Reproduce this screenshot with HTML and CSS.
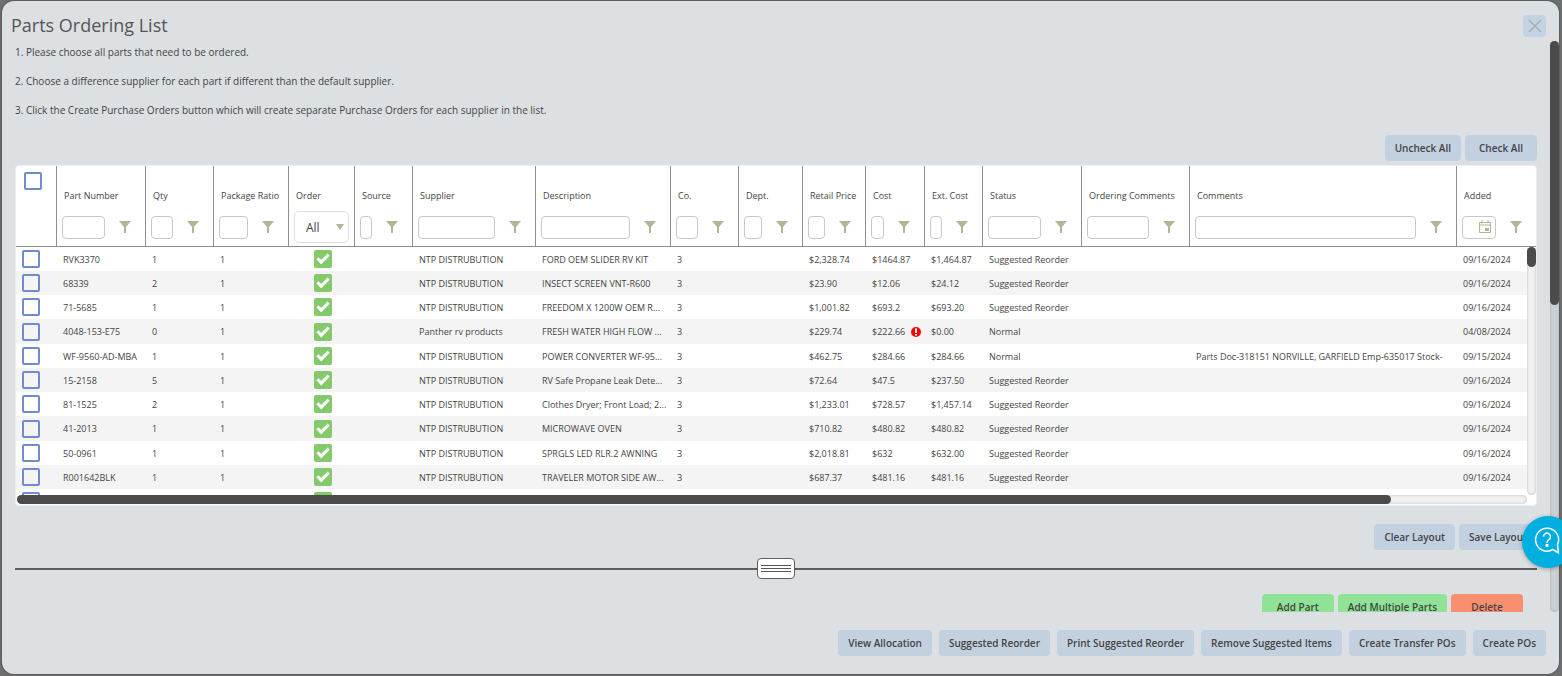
FILE: index.html
```html
<!DOCTYPE html>
<html lang="en">
<head>
    <meta charset="utf-8">
    <title>Parts Ordering List</title>
    <link rel="stylesheet" href="styles.css">
</head>
<body>

    <svg class="sprite" aria-hidden="true">
        <symbol id="funnel" viewBox="0 0 12 12"><path d="M0 0h12L7 6v6H5V6z" fill="currentColor"/></symbol>
        <symbol id="calendar" viewBox="0 0 14 14">
            <path d="M1.5 2.5h11v10h-11zM1.5 5h11M4 0v3.500M10 0v3.500" fill="none" stroke="currentColor"/>
            <path d="M7 8h4v3H7z" fill="currentColor"/>
        </symbol>
        <symbol id="alert" viewBox="0 0 10 10">
            <circle cx="5" cy="5" r="5" fill="#f00"/>
            <path d="M4 1.500h2v4.500H4zM4 7h2v1.500H4z" fill="#fff"/>
        </symbol>
    </svg>

    <div class="modal" role="dialog" aria-labelledby="title">
        <header class="modal-header">
            <h1 id="title">Parts Ordering List</h1>
            <button type="button" class="close" aria-label="Close">
                <svg width="14" height="14" viewBox="0 0 14 14"><path d="M1 1l12 12M13 1L1 13" stroke="#a9adb3" stroke-width="1.500"/></svg>
            </button>
        </header>

        <div class="modal-body">
            <div class="content">
                <div class="steps">
                    <p>1. Please choose all parts that need to be ordered.</p>
                    <p>2. Choose a difference supplier for each part if different than the default supplier.</p>
                    <p>3. Click the Create Purchase Orders button which will create separate Purchase Orders for each supplier in the list.</p>
                </div>

                <div class="toolbar">
                    <button type="button" class="btn">Uncheck All</button>
                    <button type="button" class="btn">Check All</button>
                </div>

                <div class="grid">
                    <div class="grid-view">
                        <table>
                            <colgroup id="cols"></colgroup>
                            <thead><tr id="head"></tr></thead>
                            <tbody id="rows"></tbody>
                        </table>
                        <div class="vscroll"><div class="thumb"></div></div>
                    </div>
                    <div class="hscroll"><div class="thumb"></div></div>
                </div>

                <div class="toolbar layout-bar">
                    <button type="button" class="btn">Clear Layout</button>
                    <button type="button" class="btn">Save Layout</button>
                </div>

                <div class="splitter">
                    <button type="button" class="handle" aria-label="Resize"><span></span><span></span><span></span></button>
                </div>

                <div class="toolbar part-bar">
                    <button type="button" class="btn green">Add Part</button>
                    <button type="button" class="btn green">Add Multiple Parts</button>
                    <button type="button" class="btn red">Delete</button>
                </div>
            </div>
            <div class="page-scroll"><div class="thumb"></div></div>
        </div>

        <footer class="modal-footer">
            <button type="button" class="btn">View Allocation</button>
            <button type="button" class="btn">Suggested Reorder</button>
            <button type="button" class="btn">Print Suggested Reorder</button>
            <button type="button" class="btn">Remove Suggested Items</button>
            <button type="button" class="btn">Create Transfer POs</button>
            <button type="button" class="btn">Create POs</button>
        </footer>
    </div>

    <button type="button" class="help" aria-label="Help">
        <svg width="28" height="30" viewBox="0 0 28 30" fill="none" stroke="#fff" stroke-width="1.500">
            <path d="M19 23.500A11.500 11.500 0 1 1 23.500 18.500L24.500 27z" stroke-linejoin="round"/>
            <path d="M9.500 10.500a3.500 3.500 0 1 1 5.500 3c-1.500 1-2 1.500-2 3.500"/>
            <circle cx="13" cy="19.500" r="1"/>
        </svg>
    </button>

    <script src="script.js"></script>
</body>
</html>
```
FILE: styles.css
```css
* {
    box-sizing: border-box;
}

body {
    margin: 0;
    height: 100vh;
    padding: 1px 3px 2px 2px;
    background-color: #6f6e6f;
    font-family: "Open Sans", sans-serif;
    font-size: 9px;
    color: #444;
    overflow: hidden;
}

button,
input,
select {
    font-family: inherit;
    color: inherit;
}

.sprite {
    display: none;
}

.modal {
    display: flex;
    flex-direction: column;
    height: 100%;
    background-color: #dce0e3;
    border-radius: 12px;
    box-shadow: 0 0 2px #333;
    overflow: hidden;
}

.modal-header {
    display: flex;
    justify-content: space-between;
    align-items: center;
    height: 40px;
    padding: 9px 13px 0 9px;
}

h1 {
    margin: 0;
    font-size: 18px;
    line-height: 26px;
    padding-bottom: 2px;
    font-weight: 400;
    color: #555;
}

.close {
    display: flex;
    align-items: center;
    justify-content: center;
    width: 23px;
    height: 22px;
    padding: 0;
    border: none;
    border-radius: 4px;
    background-color: #c3d3e4;
}

.modal-body {
    display: flex;
    flex: 1;
    min-height: 0;
    overflow: hidden;
}

.content {
    flex: 1;
    min-width: 0;
    padding: 0 13px;
}

.steps {
    display: flex;
    flex-direction: column;
    gap: 7px;
    font-size: 10px;
}

.steps p {
    margin: 0;
    line-height: 22px;
}

.toolbar {
    display: flex;
    justify-content: flex-end;
    gap: 4px;
    padding: 14px 0 4px;
}

.btn {
    min-width: 72px;
    height: 26px;
    padding: 0 10px;
    border: none;
    border-radius: 4px;
    background-color: #c3d0e0;
    font-size: 10px;
    font-weight: 600;
    color: #444;
    white-space: nowrap;
}

.green {
    background-color: #8fe296;
}

.red {
    background-color: #f98f70;
}

/* parts grid */
.grid {
    background-color: #fff;
    border: 1px solid #eceeef;
    border-radius: 4px;
    overflow: hidden;
}

.grid-view {
    position: relative;
    height: 329px;
    overflow: hidden;
}

table {
    width: 100%;
    table-layout: fixed;
    border-collapse: separate;
    border-spacing: 0;
}

th {
    height: 81px;
    padding: 0;
    border-left: 1px solid #8f8f8f;
    border-bottom: 1px solid #8f8f8f;
    font-weight: 400;
    text-align: left;
    vertical-align: top;
}

th:first-child {
    border-left: none;
    padding: 6px 8px;
}

.name {
    padding: 22px 0 0 7px;
    line-height: 16px;
    white-space: nowrap;
}

.filter {
    display: flex;
    align-items: center;
    gap: 14px;
    height: 32px;
    margin-top: 7px;
    padding: 0 14px 0 5px;
    color: #b1b696;
}

.filter input {
    width: 100%;
    height: 23px;
    padding: 0 3px;
    border: 1px solid #c8c8c8;
    border-radius: 4px;
}

.filter svg {
    flex: none;
}

.date {
    display: flex;
    position: relative;
    flex: 1;
}

.date svg {
    position: absolute;
    right: 4px;
    top: 4px;
}

.choice {
    position: relative;
    margin: 7px 5px 0;
    color: #b1b696;
}

.choice select {
    width: 100%;
    height: 32px;
    padding: 0 11px;
    border: 1px solid #e0e0e6;
    border-radius: 5px;
    background-color: #fff;
    appearance: none;
    font-size: 12px;
    color: #444;
}

.choice svg {
    position: absolute;
    right: 5px;
    top: 13px;
}

td {
    height: 24px;
    padding: 0 0 0 7px;
    overflow: hidden;
    white-space: nowrap;
}

tr:nth-child(4n) td {
    height: 25px;
}

tbody tr:nth-child(even) {
    background-color: #f4f4f4;
}

td:first-child {
    padding-left: 6px;
}

td:nth-child(5) {
    padding-left: 26px;
}

td svg {
    margin-left: 3px;
    vertical-align: -2px;
}

input[type="checkbox"] {
    display: block;
    width: 18px;
    height: 18px;
    margin: 0;
    border: 2px solid #6f8ccf;
    border-radius: 2px;
    background-color: transparent;
    appearance: none;
}

input.order {
    overflow: hidden;
    border: none;
    background-color: #84c96b;
}

input.order::after {
    content: "";
    display: block;
    box-sizing: border-box;
    width: 12px;
    height: 7px;
    margin: 4px 0 0 3px;
    border-left: 3px solid #fff;
    border-bottom: 3px solid #fff;
    transform: rotate(-45deg);
}

/* scrollbars */
.thumb {
    background-color: #4b4b4b;
    border-radius: 5px;
}

.vscroll {
    position: absolute;
    top: 81px;
    right: 0;
    bottom: 0;
    width: 9px;
    background-color: #f1f1f1;
    border-radius: 5px;
    box-shadow: inset 0 0 3px #bbb;
}

.vscroll .thumb {
    height: 20px;
}

.hscroll {
    height: 9px;
    margin: 0 9px 1px 1px;
    background-color: #f1f1f1;
    border-radius: 5px;
    box-shadow: inset 0 0 3px #bbb;
}

.hscroll .thumb {
    width: 91%;
    height: 9px;
}

.page-scroll {
    width: 9px;
    border-radius: 5px;
    background-color: #cdd1d4;
    box-shadow: inset 0 0 3px #aaa;
}

.page-scroll .thumb {
    height: 264px;
}

.layout-bar {
    padding-top: 18px;
}

.splitter {
    display: flex;
    align-items: center;
    margin-top: 4px;
}

.splitter::before,
.splitter::after {
    content: "";
    flex: 1;
    height: 2px;
    background-color: #5f5d5e;
}

.handle {
    display: flex;
    flex-direction: column;
    justify-content: center;
    gap: 2px;
    width: 38px;
    height: 21px;
    padding: 0 3px;
    border: 1px solid #5f5d5e;
    border-radius: 4px;
    background-color: #fff;
}

.handle span {
    height: 1px;
    background-color: #555;
}

.part-bar {
    padding: 15px 14px 0 0;
}

.modal-footer {
    display: flex;
    justify-content: flex-end;
    gap: 7px;
    padding: 18px 13px;
}

.help {
    position: fixed;
    right: -12px;
    bottom: 108px;
    width: 52px;
    height: 52px;
    padding: 2px 0 0 12px;
    border: none;
    border-radius: 50%;
    background-color: #00aee0;
    box-shadow: 0 1px 4px rgba(0, 0, 0, 0.3);
    text-align: left;
}
```
FILE: script.js
```js
// [title, width], the column without a width takes what is left
const columns = [
    ["", 40], ["Part Number", 89], ["Qty", 68], ["Package Ratio", 75], ["Order", 66], ["Source", 58],
    ["Supplier", 123], ["Description", 135], ["Co.", 68], ["Dept.", 64], ["Retail Price", 63],
    ["Cost", 59], ["Ext. Cost", 58], ["Status", 99], ["Ordering Comments", 108], ["Comments", 0], ["Added", 80]
];

const NTP = "NTP DISTRUBUTION";
const SR = "Suggested Reorder";
const parts = [
    ["RVK3370", 1, NTP, "FORD OEM SLIDER RV KIT", "$2,328.74", "$1464.87", "$1,464.87", SR, "", "09/16/2024"],
    ["68339", 2, NTP, "INSECT SCREEN VNT-R600", "$23.90", "$12.06", "$24.12", SR, "", "09/16/2024"],
    ["71-5685", 1, NTP, "FREEDOM X 1200W OEM R...", "$1,001.82", "$693.2", "$693.20", SR, "", "09/16/2024"],
    ["4048-153-E75", 0, "Panther rv products", "FRESH WATER HIGH FLOW ...", "$229.74", "$222.66", "$0.00", "Normal", "", "04/08/2024"],
    ["WF-9560-AD-MBA", 1, NTP, "POWER CONVERTER WF-95...", "$462.75", "$284.66", "$284.66", "Normal", "Parts Doc-318151 NORVILLE, GARFIELD Emp-635017 Stock-", "09/15/2024"],
    ["15-2158", 5, NTP, "RV Safe Propane Leak Dete...", "$72.64", "$47.5", "$237.50", SR, "", "09/16/2024"],
    ["81-1525", 2, NTP, "Clothes Dryer; Front Load; 2...", "$1,233.01", "$728.57", "$1,457.14", SR, "", "09/16/2024"],
    ["41-2013", 1, NTP, "MICROWAVE OVEN", "$710.82", "$480.82", "$480.82", SR, "", "09/16/2024"],
    ["50-0961", 1, NTP, "SPRGLS LED RLR.2 AWNING", "$2,018.81", "$632", "$632.00", SR, "", "09/16/2024"],
    ["R001642BLK", 1, NTP, "TRAVELER MOTOR SIDE AW...", "$687.37", "$481.16", "$481.16", SR, "", "09/16/2024"],
    ["", "", "", "", "", "", "", "", "", ""]
];

const funnel = '<svg width="12" height="12"><use href="#funnel"/></svg>';

function headCell(title) {
    if (!title) {
        return '<th><input type="checkbox" aria-label="Select all"></th>';
    }
    const name = `<div class="name">${title}</div>`;
    if (title === "Order") {
        return `<th>${name}<div class="choice"><select aria-label="Order"><option>All</option></select>
            <svg width="8" height="6"><path d="M0 0h8L4 6z" fill="currentColor"/></svg></div></th>`;
    }
    let box = `<input type="text" aria-label="Filter ${title}">`;
    if (title === "Added") {
        box = `<div class="date">${box}<svg width="14" height="14"><use href="#calendar"/></svg></div>`;
    }
    return `<th>${name}<div class="filter">${box}${funnel}</div></th>`;
}

function partRow([number, qty, supplier, description, retail, cost, ext, status, comments, added]) {
    const alert = qty === 0 ? '<svg width="10" height="10"><use href="#alert"/></svg>' : "";
    const filled = number !== "";
    const cells = [
        '<input type="checkbox" aria-label="Select part">', number, qty, filled ? 1 : "",
        '<input type="checkbox" class="order" aria-label="Order part" checked>', "", supplier, description,
        filled ? 3 : "", "", retail, cost + " " + alert, ext, status, "", comments, added
    ];
    return "<tr>" + cells.map(cell => `<td>${cell}</td>`).join("") + "</tr>";
}

document.getElementById("cols").innerHTML =
    columns.map(([, width]) => width ? `<col style="width: ${width}px">` : "<col>").join("");
document.getElementById("head").innerHTML = columns.map(([title]) => headCell(title)).join("");
document.getElementById("rows").innerHTML = parts.map(partRow).join("");
```
